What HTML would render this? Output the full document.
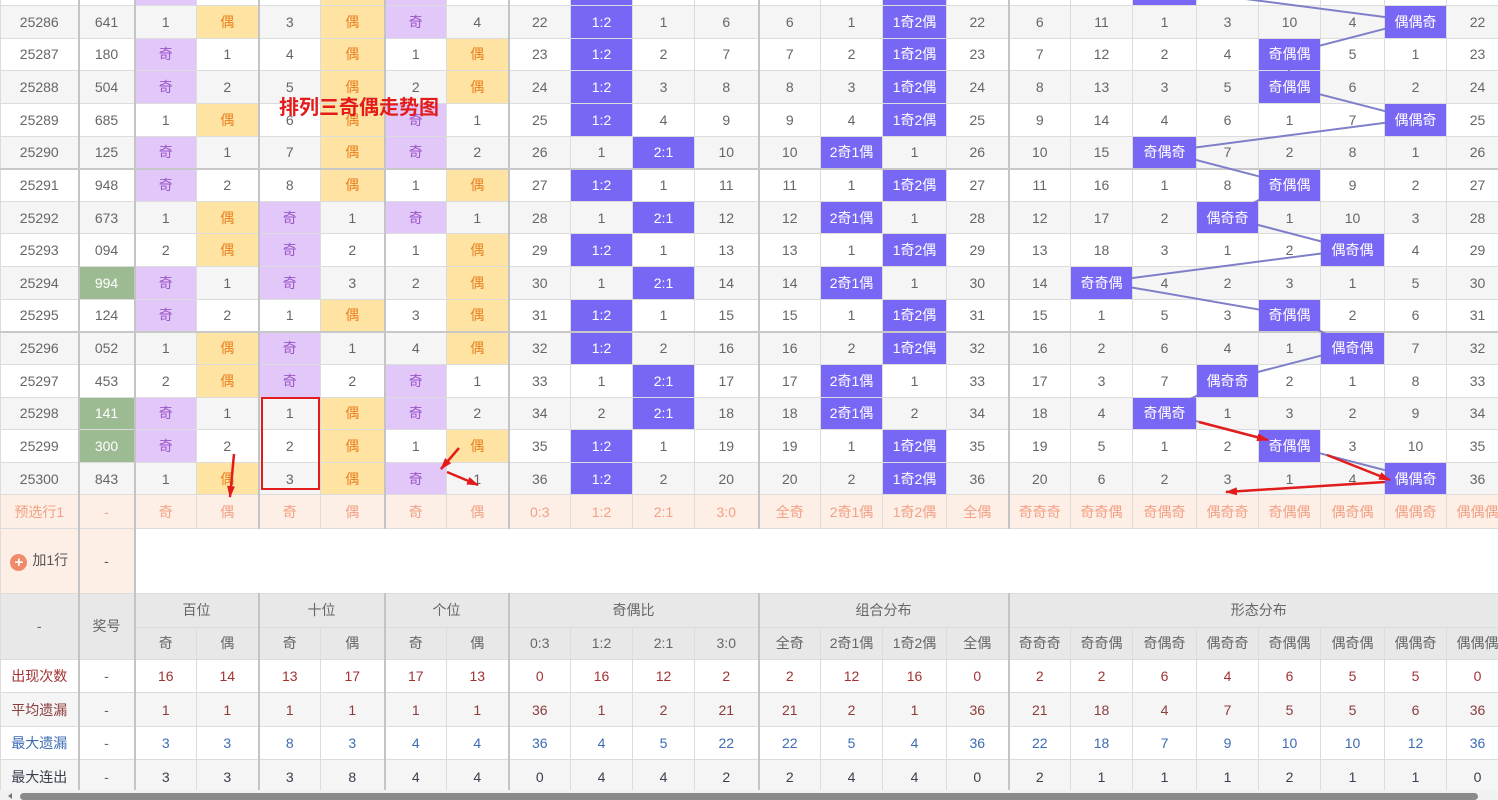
<!DOCTYPE html>
<html><head><meta charset="utf-8">
<style>
html,body{margin:0;padding:0;width:1498px;height:800px;overflow:hidden;background:#fff;}
body{position:relative;font-family:"Liberation Sans","Noto Sans CJK SC",sans-serif;}
table{position:absolute;left:0;top:-27.64px;border-collapse:collapse;table-layout:fixed;width:1508px;}
td{border:1px solid #dcdcdc;text-align:center;font-size:14px;color:#666;padding:0;white-space:nowrap;overflow:hidden;}
tr.d{height:32.64px;}
tr.a td{background:#f5f5f5;}
tr.sep td{border-bottom:2px solid #c8c8c8;}
td.p{background:#e2c8f8 !important;color:#9a55c8;}
td.y{background:#ffe3a3 !important;color:#e9801f;}
td.b{background:#7866f4 !important;color:#fff;position:relative;z-index:2;}
td.gr{background:#9cbb92 !important;color:#fff;}
tr.pre td{background:#fdeee6;color:#f2a184;height:32.5px;}
tr.add td{height:64px;}
tr.add td.s{background:#fdeee6;color:#555;}
tr.h td{background:#e8e8e8;color:#666;}
tr.st td{height:32.5px;}
tr.st.a td{background:#f5f5f5;}
.r1 td{color:#a33333;} .r2 td{color:#8b3c3c;} .r3 td{color:#3d6cb5;} .r4 td{color:#3a4050;}
.r1 td:nth-child(2),.r2 td:nth-child(2),.r3 td:nth-child(2),.r4 td:nth-child(2){color:#666;}
.plus{display:inline-block;width:17px;height:17px;border-radius:50%;background:#f08a68;color:#fff;font-weight:bold;font-size:15px;line-height:17px;vertical-align:-2px;margin-right:5px;}
svg{position:absolute;left:0;top:0;pointer-events:none;}
.title{position:absolute;left:279px;top:93px;color:#e31b1b;font-weight:bold;font-size:20px;z-index:4;font-family:"Noto Sans CJK SC",sans-serif;line-height:26px;}
</style></head><body>
<table>
<colgroup>
<col style="width:78px"><col style="width:56px;border-left:2px solid #c4c4c4">
<col style="width:62px;border-left:2px solid #c4c4c4"><col style="width:62px">
<col style="width:62px;border-left:2px solid #c4c4c4"><col style="width:64px">
<col style="width:62px;border-left:2px solid #c4c4c4"><col style="width:62px">
<col style="width:62px;border-left:2px solid #c4c4c4"><col style="width:62px"><col style="width:62px"><col style="width:64px">
<col style="width:62px;border-left:2px solid #c4c4c4"><col style="width:62px"><col style="width:64px"><col style="width:62px">
<col style="width:62px;border-left:2px solid #c4c4c4"><col style="width:62px"><col style="width:64px"><col style="width:62px"><col style="width:62px"><col style="width:64px"><col style="width:62px"><col style="width:62px">
</colgroup>
<tr class="d"><td>25285</td><td>561</td><td class="p">奇</td><td>1</td><td>6</td><td class="y">偶</td><td class="p">奇</td><td>3</td><td>21</td><td class="b">1:2</td><td>5</td><td>5</td><td>5</td><td>6</td><td class="b">1奇2偶</td><td>21</td><td>5</td><td>10</td><td class="b">奇偶奇</td><td>2</td><td>9</td><td>3</td><td>8</td><td>21</td></tr>
<tr class="d a"><td>25286</td><td>641</td><td>1</td><td class="y">偶</td><td>3</td><td class="y">偶</td><td class="p">奇</td><td>4</td><td>22</td><td class="b">1:2</td><td>1</td><td>6</td><td>6</td><td>1</td><td class="b">1奇2偶</td><td>22</td><td>6</td><td>11</td><td>1</td><td>3</td><td>10</td><td>4</td><td class="b">偶偶奇</td><td>22</td></tr>
<tr class="d"><td>25287</td><td>180</td><td class="p">奇</td><td>1</td><td>4</td><td class="y">偶</td><td>1</td><td class="y">偶</td><td>23</td><td class="b">1:2</td><td>2</td><td>7</td><td>7</td><td>2</td><td class="b">1奇2偶</td><td>23</td><td>7</td><td>12</td><td>2</td><td>4</td><td class="b">奇偶偶</td><td>5</td><td>1</td><td>23</td></tr>
<tr class="d a"><td>25288</td><td>504</td><td class="p">奇</td><td>2</td><td>5</td><td class="y">偶</td><td>2</td><td class="y">偶</td><td>24</td><td class="b">1:2</td><td>3</td><td>8</td><td>8</td><td>3</td><td class="b">1奇2偶</td><td>24</td><td>8</td><td>13</td><td>3</td><td>5</td><td class="b">奇偶偶</td><td>6</td><td>2</td><td>24</td></tr>
<tr class="d"><td>25289</td><td>685</td><td>1</td><td class="y">偶</td><td>6</td><td class="y">偶</td><td class="p">奇</td><td>1</td><td>25</td><td class="b">1:2</td><td>4</td><td>9</td><td>9</td><td>4</td><td class="b">1奇2偶</td><td>25</td><td>9</td><td>14</td><td>4</td><td>6</td><td>1</td><td>7</td><td class="b">偶偶奇</td><td>25</td></tr>
<tr class="d a sep"><td>25290</td><td>125</td><td class="p">奇</td><td>1</td><td>7</td><td class="y">偶</td><td class="p">奇</td><td>2</td><td>26</td><td>1</td><td class="b">2:1</td><td>10</td><td>10</td><td class="b">2奇1偶</td><td>1</td><td>26</td><td>10</td><td>15</td><td class="b">奇偶奇</td><td>7</td><td>2</td><td>8</td><td>1</td><td>26</td></tr>
<tr class="d"><td>25291</td><td>948</td><td class="p">奇</td><td>2</td><td>8</td><td class="y">偶</td><td>1</td><td class="y">偶</td><td>27</td><td class="b">1:2</td><td>1</td><td>11</td><td>11</td><td>1</td><td class="b">1奇2偶</td><td>27</td><td>11</td><td>16</td><td>1</td><td>8</td><td class="b">奇偶偶</td><td>9</td><td>2</td><td>27</td></tr>
<tr class="d a"><td>25292</td><td>673</td><td>1</td><td class="y">偶</td><td class="p">奇</td><td>1</td><td class="p">奇</td><td>1</td><td>28</td><td>1</td><td class="b">2:1</td><td>12</td><td>12</td><td class="b">2奇1偶</td><td>1</td><td>28</td><td>12</td><td>17</td><td>2</td><td class="b">偶奇奇</td><td>1</td><td>10</td><td>3</td><td>28</td></tr>
<tr class="d"><td>25293</td><td>094</td><td>2</td><td class="y">偶</td><td class="p">奇</td><td>2</td><td>1</td><td class="y">偶</td><td>29</td><td class="b">1:2</td><td>1</td><td>13</td><td>13</td><td>1</td><td class="b">1奇2偶</td><td>29</td><td>13</td><td>18</td><td>3</td><td>1</td><td>2</td><td class="b">偶奇偶</td><td>4</td><td>29</td></tr>
<tr class="d a"><td>25294</td><td class="gr">994</td><td class="p">奇</td><td>1</td><td class="p">奇</td><td>3</td><td>2</td><td class="y">偶</td><td>30</td><td>1</td><td class="b">2:1</td><td>14</td><td>14</td><td class="b">2奇1偶</td><td>1</td><td>30</td><td>14</td><td class="b">奇奇偶</td><td>4</td><td>2</td><td>3</td><td>1</td><td>5</td><td>30</td></tr>
<tr class="d sep"><td>25295</td><td>124</td><td class="p">奇</td><td>2</td><td>1</td><td class="y">偶</td><td>3</td><td class="y">偶</td><td>31</td><td class="b">1:2</td><td>1</td><td>15</td><td>15</td><td>1</td><td class="b">1奇2偶</td><td>31</td><td>15</td><td>1</td><td>5</td><td>3</td><td class="b">奇偶偶</td><td>2</td><td>6</td><td>31</td></tr>
<tr class="d a"><td>25296</td><td>052</td><td>1</td><td class="y">偶</td><td class="p">奇</td><td>1</td><td>4</td><td class="y">偶</td><td>32</td><td class="b">1:2</td><td>2</td><td>16</td><td>16</td><td>2</td><td class="b">1奇2偶</td><td>32</td><td>16</td><td>2</td><td>6</td><td>4</td><td>1</td><td class="b">偶奇偶</td><td>7</td><td>32</td></tr>
<tr class="d"><td>25297</td><td>453</td><td>2</td><td class="y">偶</td><td class="p">奇</td><td>2</td><td class="p">奇</td><td>1</td><td>33</td><td>1</td><td class="b">2:1</td><td>17</td><td>17</td><td class="b">2奇1偶</td><td>1</td><td>33</td><td>17</td><td>3</td><td>7</td><td class="b">偶奇奇</td><td>2</td><td>1</td><td>8</td><td>33</td></tr>
<tr class="d a"><td>25298</td><td class="gr">141</td><td class="p">奇</td><td>1</td><td>1</td><td class="y">偶</td><td class="p">奇</td><td>2</td><td>34</td><td>2</td><td class="b">2:1</td><td>18</td><td>18</td><td class="b">2奇1偶</td><td>2</td><td>34</td><td>18</td><td>4</td><td class="b">奇偶奇</td><td>1</td><td>3</td><td>2</td><td>9</td><td>34</td></tr>
<tr class="d"><td>25299</td><td class="gr">300</td><td class="p">奇</td><td>2</td><td>2</td><td class="y">偶</td><td>1</td><td class="y">偶</td><td>35</td><td class="b">1:2</td><td>1</td><td>19</td><td>19</td><td>1</td><td class="b">1奇2偶</td><td>35</td><td>19</td><td>5</td><td>1</td><td>2</td><td class="b">奇偶偶</td><td>3</td><td>10</td><td>35</td></tr>
<tr class="d a"><td>25300</td><td>843</td><td>1</td><td class="y">偶</td><td>3</td><td class="y">偶</td><td class="p">奇</td><td>1</td><td>36</td><td class="b">1:2</td><td>2</td><td>20</td><td>20</td><td>2</td><td class="b">1奇2偶</td><td>36</td><td>20</td><td>6</td><td>2</td><td>3</td><td>1</td><td>4</td><td class="b">偶偶奇</td><td>36</td></tr>
<tr class="pre"><td>预选行1</td><td>-</td><td>奇</td><td>偶</td><td>奇</td><td>偶</td><td>奇</td><td>偶</td><td>0:3</td><td>1:2</td><td>2:1</td><td>3:0</td><td>全奇</td><td>2奇1偶</td><td>1奇2偶</td><td>全偶</td><td>奇奇奇</td><td>奇奇偶</td><td>奇偶奇</td><td>偶奇奇</td><td>奇偶偶</td><td>偶奇偶</td><td>偶偶奇</td><td>偶偶偶</td></tr>
<tr class="add"><td class="s"><span class="plus">+</span>加1行</td><td class="s">-</td><td colspan="22" style="background:#fff"></td></tr>
<tr class="h" style="height:34px"><td rowspan="2">-</td><td rowspan="2">奖号</td><td colspan="2">百位</td><td colspan="2">十位</td><td colspan="2">个位</td><td colspan="4">奇偶比</td><td colspan="4">组合分布</td><td colspan="8">形态分布</td></tr>
<tr class="h" style="height:32px"><td>奇</td><td>偶</td><td>奇</td><td>偶</td><td>奇</td><td>偶</td><td>0:3</td><td>1:2</td><td>2:1</td><td>3:0</td><td>全奇</td><td>2奇1偶</td><td>1奇2偶</td><td>全偶</td><td>奇奇奇</td><td>奇奇偶</td><td>奇偶奇</td><td>偶奇奇</td><td>奇偶偶</td><td>偶奇偶</td><td>偶偶奇</td><td>偶偶偶</td></tr>
<tr class="st r1"><td>出现次数</td><td>-</td><td>16</td><td>14</td><td>13</td><td>17</td><td>17</td><td>13</td><td>0</td><td>16</td><td>12</td><td>2</td><td>2</td><td>12</td><td>16</td><td>0</td><td>2</td><td>2</td><td>6</td><td>4</td><td>6</td><td>5</td><td>5</td><td>0</td></tr>
<tr class="st a r2"><td>平均遗漏</td><td>-</td><td>1</td><td>1</td><td>1</td><td>1</td><td>1</td><td>1</td><td>36</td><td>1</td><td>2</td><td>21</td><td>21</td><td>2</td><td>1</td><td>36</td><td>21</td><td>18</td><td>4</td><td>7</td><td>5</td><td>5</td><td>6</td><td>36</td></tr>
<tr class="st r3"><td>最大遗漏</td><td>-</td><td>3</td><td>3</td><td>8</td><td>3</td><td>4</td><td>4</td><td>36</td><td>4</td><td>5</td><td>22</td><td>22</td><td>5</td><td>4</td><td>36</td><td>22</td><td>18</td><td>7</td><td>9</td><td>10</td><td>10</td><td>12</td><td>36</td></tr>
<tr class="st a r4"><td>最大连出</td><td>-</td><td>3</td><td>3</td><td>3</td><td>8</td><td>4</td><td>4</td><td>0</td><td>4</td><td>4</td><td>2</td><td>2</td><td>4</td><td>4</td><td>0</td><td>2</td><td>1</td><td>1</td><td>1</td><td>2</td><td>1</td><td>1</td><td>0</td></tr>
</table>

<svg width="1498" height="800" style="z-index:1">
<polyline fill="none" stroke="#7f7fc9" stroke-width="2" points="1164,-11.6 1415,21 1289,53.6 1289,86.3 1415,118.9 1164,151.6 1289,184.2 1227,216.8 1352,249.5 1101,282.1 1289,314.8 1352,347.6 1227,380 1164,412.7 1289,445.3 1415,478"/>
</svg>

<div class="title">排列三奇偶走势图</div>

<svg width="1498" height="800" style="z-index:5">
<defs><marker id="m" markerWidth="12" markerHeight="8" refX="11" refY="4" orient="auto" markerUnits="userSpaceOnUse"><path d="M0,0 L12,4 L0,8 z" fill="#e21c1c"/></marker></defs>
<rect x="262" y="398" width="57" height="91" fill="none" stroke="#e21c1c" stroke-width="2"/>
<g stroke="#e21c1c" stroke-width="2.5" fill="none" marker-end="url(#m)">
<line x1="234" y1="454" x2="230" y2="497"/>
<line x1="459" y1="448" x2="441" y2="469"/>
<line x1="447" y1="472" x2="478" y2="485"/>
<line x1="1199" y1="422" x2="1268" y2="440"/>
<line x1="1327" y1="455" x2="1390" y2="480"/>
<line x1="1385" y1="482" x2="1226" y2="492"/>
</g>
</svg>

<div style="position:absolute;left:0;top:790px;width:1498px;height:10px;background:#f1f1f1;z-index:6"></div>
<div style="position:absolute;left:20px;top:793px;width:1458px;height:7px;background:#8a8a8a;border-radius:4px;z-index:7"></div>
<div style="position:absolute;left:8px;top:793px;width:0;height:0;border-top:3px solid transparent;border-bottom:3px solid transparent;border-right:4px solid #777;z-index:7"></div>
</body></html>
